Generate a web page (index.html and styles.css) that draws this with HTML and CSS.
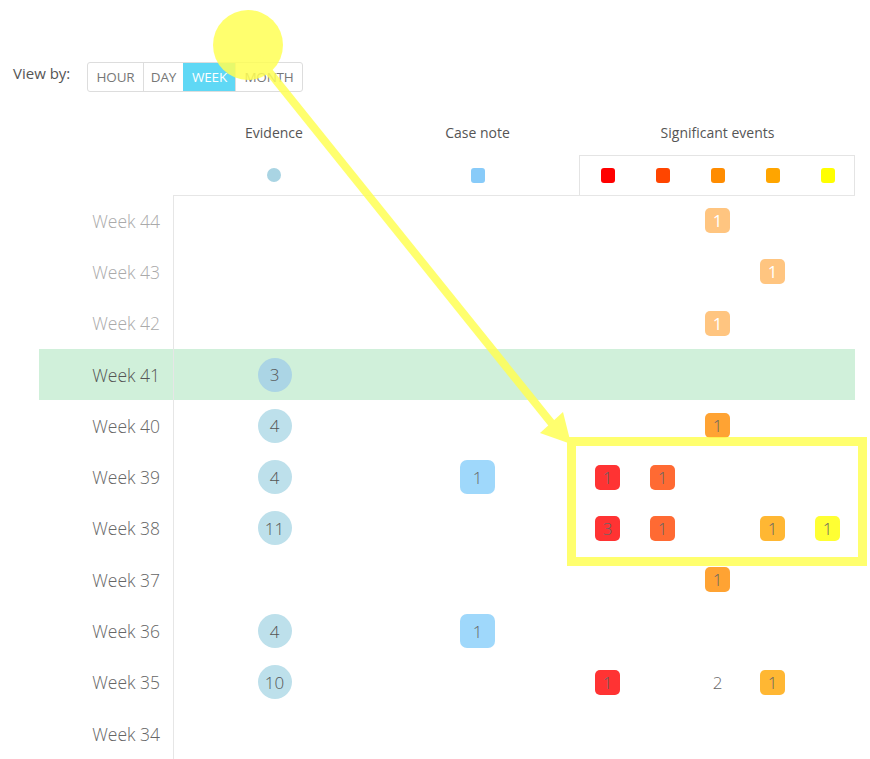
FILE: index.html
```html
<!DOCTYPE html>
<html lang="en">
<head>
<meta charset="utf-8">
<title>Timeline</title>
<link rel="stylesheet" href="styles.css">
</head>
<body>
<div class="page">
  <div class="toolbar">
    <span class="viewby">View by:</span>
    <div class="btn-group">
      <span class="btn">HOUR</span>
      <span class="btn">DAY</span>
      <span class="btn active">WEEK</span>
      <span class="btn">MONTH</span>
    </div>
  </div>

  <div class="chart">
    <div class="head-row">
      <div class="lbl"></div>
      <div class="h-ev">Evidence</div>
      <div class="h-cn">Case note</div>
      <div class="h-se">Significant events</div>
    </div>
    <div class="legend-row">
      <div class="lbl"></div>
      <div class="cell"><span class="lg-ev"></span></div>
      <div class="cell"><span class="lg-cn"></span></div>
      <div class="lg-box">
        <div class="cell"><span class="lg-se c-red"></span></div>
        <div class="cell"><span class="lg-se c-orr"></span></div>
        <div class="cell"><span class="lg-se c-dor"></span></div>
        <div class="cell"><span class="lg-se c-or"></span></div>
        <div class="cell"><span class="lg-se c-yel"></span></div>
      </div>
    </div>

    <div class="rows">
      <div class="row faded">
        <div class="lbl">Week 44</div>
        <div class="cell ev"></div><div class="cell"></div>
        <div class="cell"></div><div class="cell"></div><div class="cell"><span class="se f-dor">1</span></div><div class="cell"></div><div class="cell"></div>
      </div>
      <div class="row faded">
        <div class="lbl">Week 43</div>
        <div class="cell ev"></div><div class="cell"></div>
        <div class="cell"></div><div class="cell"></div><div class="cell"></div><div class="cell"><span class="se f-dor">1</span></div><div class="cell"></div>
      </div>
      <div class="row faded">
        <div class="lbl">Week 42</div>
        <div class="cell ev"></div><div class="cell"></div>
        <div class="cell"></div><div class="cell"></div><div class="cell"><span class="se f-dor">1</span></div><div class="cell"></div><div class="cell"></div>
      </div>
      <div class="row current">
        <div class="lbl">Week 41</div>
        <div class="cell ev"><span class="evb strong">3</span></div><div class="cell"></div>
        <div class="cell"></div><div class="cell"></div><div class="cell"></div><div class="cell"></div><div class="cell"></div>
      </div>
      <div class="row">
        <div class="lbl">Week 40</div>
        <div class="cell ev"><span class="evb">4</span></div><div class="cell"></div>
        <div class="cell"></div><div class="cell"></div><div class="cell"><span class="se b-dor">1</span></div><div class="cell"></div><div class="cell"></div>
      </div>
      <div class="row">
        <div class="lbl">Week 39</div>
        <div class="cell ev"><span class="evb">4</span></div><div class="cell"><span class="cnb">1</span></div>
        <div class="cell"><span class="se b-red">1</span></div><div class="cell"><span class="se b-orr">1</span></div><div class="cell"></div><div class="cell"></div><div class="cell"></div>
      </div>
      <div class="row">
        <div class="lbl">Week 38</div>
        <div class="cell ev"><span class="evb">11</span></div><div class="cell"></div>
        <div class="cell"><span class="se b-red">3</span></div><div class="cell"><span class="se b-orr">1</span></div><div class="cell"></div><div class="cell"><span class="se b-or">1</span></div><div class="cell"><span class="se b-yel">1</span></div>
      </div>
      <div class="row">
        <div class="lbl">Week 37</div>
        <div class="cell ev"></div><div class="cell"></div>
        <div class="cell"></div><div class="cell"></div><div class="cell"><span class="se b-dor">1</span></div><div class="cell"></div><div class="cell"></div>
      </div>
      <div class="row">
        <div class="lbl">Week 36</div>
        <div class="cell ev"><span class="evb">4</span></div><div class="cell"><span class="cnb">1</span></div>
        <div class="cell"></div><div class="cell"></div><div class="cell"></div><div class="cell"></div><div class="cell"></div>
      </div>
      <div class="row">
        <div class="lbl">Week 35</div>
        <div class="cell ev"><span class="evb">10</span></div><div class="cell"></div>
        <div class="cell"><span class="se b-red">1</span></div><div class="cell"></div><div class="cell"><span class="plain">2</span></div><div class="cell"><span class="se b-or">1</span></div><div class="cell"></div>
      </div>
      <div class="row">
        <div class="lbl">Week 34</div>
        <div class="cell ev"></div><div class="cell"></div>
        <div class="cell"></div><div class="cell"></div><div class="cell"></div><div class="cell"></div><div class="cell"></div>
      </div>
    </div>
  </div>

  <svg class="annotation" width="870" height="759" viewBox="0 0 870 759" xmlns="http://www.w3.org/2000/svg">
    <g opacity="0.85">
      <circle cx="248" cy="45" r="35" fill="#ffff55"/>
      <line x1="258" y1="58" x2="553" y2="425" stroke="#ffff55" stroke-width="8"/>
      <polygon points="571,444 540,433 563,412" fill="#ffff55"/>
      <rect x="571.5" y="441.5" width="291" height="120" fill="none" stroke="#ffff55" stroke-width="9"/>
    </g>
  </svg>
</div>
</body>
</html>
```

FILE: styles.css
```css
* { box-sizing: border-box; }

html, body {
  margin: 0;
  padding: 0;
  background: #ffffff;
}

body {
  font-family: "Open Sans", "Noto Sans", "Liberation Sans", sans-serif;
  color: #555;
  width: 870px;
  height: 759px;
  overflow: hidden;
}

.page {
  position: relative;
  width: 870px;
  height: 759px;
}

/* toolbar */
.toolbar {
  display: flex;
  align-items: flex-start;
  padding: 62px 0 0 13px;
  gap: 16px;
}

.viewby {
  font-size: 15px;
  line-height: 20px;
  margin-top: 1px;
  color: #555;
  width: 58px;
  white-space: nowrap;
}

.btn-group {
  display: flex;
  height: 30px;
  border: 1px solid #ddd;
  border-radius: 3px;
  overflow: hidden;
}

.btn {
  display: flex;
  align-items: center;
  justify-content: center;
  font-size: 13.5px;
  color: #777;
  border-left: 1px solid #ddd;
  letter-spacing: -0.2px;
}

.btn:nth-child(1) { width: 55px; border-left: none; }
.btn:nth-child(2) { width: 40px; }
.btn:nth-child(3) { width: 52px; }
.btn:nth-child(4) { width: 67px; }

.btn.active {
  background: #5fd8f5;
  color: #fff;
  border-left-color: #5fd8f5;
}

/* chart */
.chart {
  margin-left: 39px;
  width: 816px;
  margin-top: 31px;
}

.head-row,
.legend-row,
.row {
  display: grid;
  grid-template-columns: 134px 202px 205px repeat(5, 55px);
}

.head-row {
  height: 20px;
  font-size: 14px;
  line-height: 20px;
  color: #555;
}

.h-ev, .h-cn { text-align: center; }
.h-se { grid-column: span 5; text-align: center; }

.legend-row {
  margin-top: 12px;
  height: 40px;
}

.lg-box {
  grid-column: span 5;
  display: grid;
  grid-template-columns: repeat(5, 55px);
  border: 1px solid #e4e4e4;
  border-bottom: none;
  margin-left: -1px;
}

.cell {
  display: flex;
  align-items: center;
  justify-content: center;
}

.lg-ev {
  width: 14px;
  height: 14px;
  border-radius: 50%;
  background: #a9d4e3;
}

.lg-cn {
  width: 14px;
  height: 15px;
  border-radius: 3px;
  background: #88cbf9;
}

.lg-se {
  width: 14px;
  height: 15px;
  border-radius: 3px;
}

.c-red { background: #ff0000; }
.c-orr { background: #ff4500; }
.c-dor { background: #ff8c00; }
.c-or  { background: #ffa500; }
.c-yel { background: #ffff00; }

/* rows */
.rows {
  position: relative;
}

.rows::before {
  content: "";
  position: absolute;
  left: 134px;
  right: 0;
  top: 0;
  border-top: 1px solid #e6e6e6;
}

.row {
  height: 51.3px;
  font-size: 17px;
  font-weight: 300;
}

.row .lbl {
  display: flex;
  align-items: center;
  justify-content: flex-end;
  padding-right: 13px;
  color: #666;
  font-size: 17.5px;
}

.row .ev {
  border-left: 1px solid #e6e6e6;
}

.row.faded .lbl { color: #aaa; }

.row.current {
  background: #d0f0da;
}

.row.current .lbl { color: #555; }

.evb {
  width: 34px;
  height: 34px;
  border-radius: 50%;
  background: #bde0eb;
  color: #555;
  display: flex;
  align-items: center;
  justify-content: center;
  font-size: 17px;
}

.evb.strong { background: #abd5e5; }

.cnb {
  width: 35px;
  height: 34px;
  border-radius: 7px;
  background: #9fd8fb;
  color: #666;
  display: flex;
  align-items: center;
  justify-content: center;
  font-size: 17px;
}

.se {
  width: 25px;
  height: 25px;
  border-radius: 5px;
  display: flex;
  align-items: center;
  justify-content: center;
  font-size: 17px;
  color: #666;
}

.plain {
  font-size: 17px;
  color: #666;
}

.b-red { background: #ff3333; }
.b-orr { background: #ff6a33; }
.b-dor { background: #ffa333; }
.b-or  { background: #ffb733; }
.b-yel { background: #ffff33; }
.f-dor { background: #ffc580; color: #fff; font-weight: 400; }

/* annotation overlay */
.annotation {
  position: absolute;
  left: 0;
  top: 0;
  pointer-events: none;
}
```
